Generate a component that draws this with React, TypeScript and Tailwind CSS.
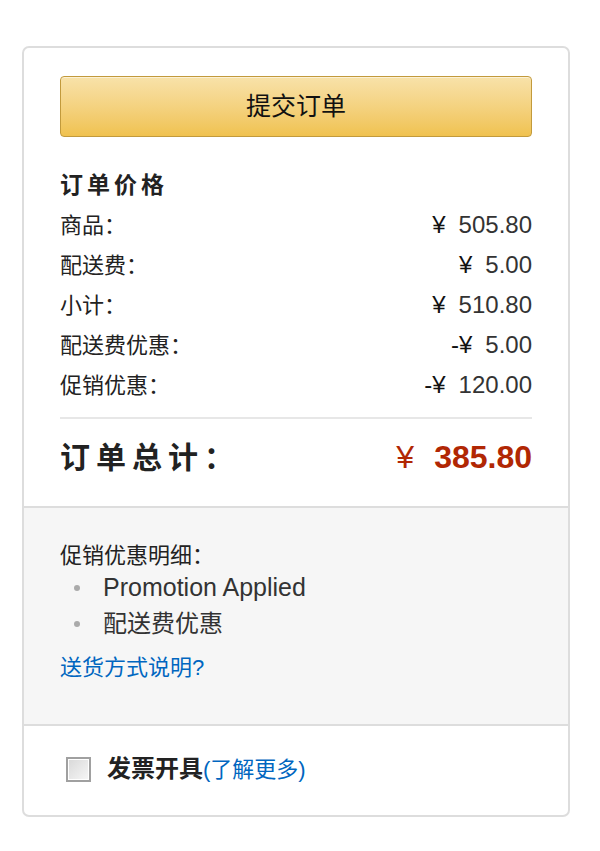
import React from "react";

const cjk = "font-['Liberation_Sans','Noto_Sans_CJK_SC',sans-serif]";

type Line = { label: string; value: string; minus?: boolean };

const lines: Line[] = [
  { label: "商品：", value: "505.80" },
  { label: "配送费：", value: "5.00" },
  { label: "小计：", value: "510.80" },
  { label: "配送费优惠：", value: "5.00", minus: true },
  { label: "促销优惠：", value: "120.00", minus: true },
];

function PriceRow({ label, value, minus }: Line) {
  return (
    <div className="flex items-center justify-between h-[40px]">
      <span className="text-[22px] text-[#222]">{label}</span>
      <span className="text-[24px] text-[#333]">
        <span className="text-[#111]">{minus ? "-" : ""}¥</span>
        <span className="ml-[13px]">{value}</span>
      </span>
    </div>
  );
}

export default function App() {
  return (
    <div className={`w-[600px] h-[851px] bg-white pt-[46px] pl-[22px] ${cjk}`}>
      <div className="w-[548px] border-2 border-[#dddddd] rounded-[7px] overflow-hidden">
        <div className="px-[36px] pt-[28px] pb-[24px]">
          <button className="w-full h-[61px] rounded-[4px] border border-[#c29a3c] bg-gradient-to-b from-[#f8e2a9] to-[#f0c24f] shadow-[inset_0_1px_0_rgba(255,255,255,0.5)] text-[25px] text-[#111]">
            提交订单
          </button>

          <div className="mt-[28px] h-[40px] flex items-center text-[23px] font-bold tracking-[4px] text-[#222]">订单价格</div>
          {lines.map((l) => (
            <PriceRow key={l.label} {...l} />
          ))}

          <div className="mt-[12px] border-t-2 border-[#e7e7e7]" />

          <div className="mt-[13px] h-[50px] flex items-center justify-between">
            <span className="text-[30px] font-bold text-[#222] tracking-[6px]">订单总计：</span>
            <span className="text-[32px] text-[#b12704]">
              ¥<span className="ml-[20px] font-bold">385.80</span>
            </span>
          </div>
        </div>

        <div className="border-t-2 border-[#dddddd] bg-[#f6f6f6] px-[36px] pt-[32px] pb-[40px]">
          <div className="text-[22px] leading-[32px] text-[#222]">促销优惠明细：</div>
          <ul className="flex flex-col gap-[4px]">
            <li className="flex items-center h-[32px] text-[25px] text-[#333]">
              <span className="ml-[14px] mr-[23px] w-[6px] h-[6px] rounded-full bg-[#aaaaaa]" />
              Promotion Applied
            </li>
            <li className="flex items-center h-[32px] text-[24px] text-[#333]">
              <span className="ml-[14px] mr-[23px] w-[6px] h-[6px] rounded-full bg-[#aaaaaa]" />
              配送费优惠
            </li>
          </ul>
          <a className="mt-[12px] block text-[22px] leading-[32px] text-[#0066c0]">送货方式说明?</a>
        </div>

        <div className="border-t-2 border-[#dddddd] pl-[42px] pr-[36px] pt-[25px] pb-[28px] flex items-center">
          <span className="w-[25px] h-[25px] border-2 border-[#a0a0a0] bg-gradient-to-br from-[#d8d8d8] to-[#f7f7f7] shadow-[inset_0_0_0_1px_#fff]" />
          <span className="ml-[16px] text-[24px] font-bold text-[#222]">发票开具</span>
          <a className="text-[22px] text-[#0066c0]">(了解更多)</a>
        </div>
      </div>
    </div>
  );
}
